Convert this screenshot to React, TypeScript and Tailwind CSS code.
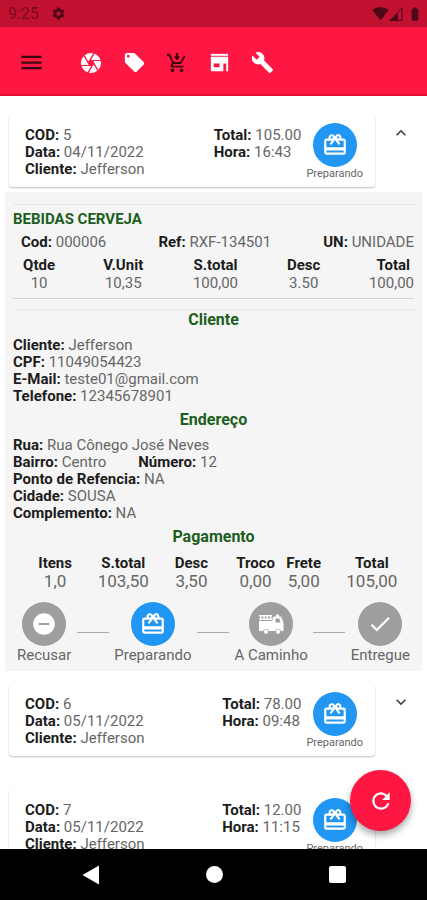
import { useState } from "react";
import type { ReactNode } from "react";
import {
  MdBatteryFull,
  MdBuild,
  MdCamera,
  MdCheck,
  MdExpandLess,
  MdExpandMore,
  MdLocalOffer,
  MdMenu,
  MdRedeem,
  MdRefresh,
  MdRemoveCircle,
  MdSettings,
  MdSignalWifi4Bar,
} from "react-icons/md";

type Order = {
  cod: number;
  date: string;
  time: string;
  total: string;
};

const orders: Order[] = [
  { cod: 5, date: "04/11/2022", time: "16:43", total: "105.00" },
  { cod: 6, date: "05/11/2022", time: "09:48", total: "78.00" },
  { cod: 7, date: "05/11/2022", time: "11:15", total: "12.00" },
];

function TruckIcon() {
  return (
    <svg viewBox="0 0 26 22" className="w-[26px] h-[22px]" fill="currentColor" aria-hidden="true">
      <path d="M1 2h13v1.500H1zM1 5.500h13V7H1zM2 3h1.500v4H2zM5.300 3h1.500v4H5.300zM8.600 3h1.500v4H8.600zM12 3h1.500v4H12z" />
      <path
        fillRule="evenodd"
        d="M1 8h13.500V5.500q0-2 2-2h1.500V1.500h3v2h1q1.200 0 1.700 1.300L25.500 10v8h-2.400a3.100 3.100 0 0 0-6 0h-6a3.100 3.100 0 0 0-6 0H1zM17.500 5.500V9.500h5l-1.200-4z"
      />
      <circle cx="8.100" cy="18.500" r="2.200" />
      <circle cx="20.100" cy="18.500" r="2.200" />
    </svg>
  );
}

function CartDownIcon() {
  return (
    <svg viewBox="0 0 24 24" className="size-[22px]" fill="currentColor" aria-hidden="true">
      <path d="M10.800 1h2.400v4h2.600L12 9 8.200 5h2.600z" />
      <path d="M1 2h3.300l4.200 9h7l3.900-7 1.700 1-3.900 7c-.3.600-1 1-1.700 1H8.100l-.9 1.700c0 .2.100.3.300.3H19v2H7c-1.100 0-2-.9-2-2 0-.4.100-.7.200-1l1.400-2.400L3 4H1z" />
      <circle cx="7" cy="20" r="2" />
      <circle cx="17" cy="20" r="2" />
    </svg>
  );
}

function StoreIcon() {
  return (
    <svg viewBox="0 0 24 24" className="size-[23px]" fill="currentColor" aria-hidden="true">
      <path d="M3 3h18v2H3z" />
      <path fillRule="evenodd" d="M3 6h18v15h-2v-8h-3v8H3zM6 13v4h6v-4z" />
    </svg>
  );
}

function SignalIcon() {
  return (
    <svg viewBox="0 0 14 14" className="w-[14px] h-[14px]" aria-hidden="true">
      <path d="M0 14L9 5v9z" fill="currentColor" />
      <path d="M9 5l4-4v12.500H9" fill="none" stroke="currentColor" />
    </svg>
  );
}

function Field({ label, children }: { label: string; children: ReactNode }) {
  return (
    <p>
      <b className="font-bold text-[#1c1c1c]">{label}:</b> {children}
    </p>
  );
}

function SectionTitle({ children }: { children: ReactNode }) {
  return <h2 className="text-center text-base leading-5 font-bold text-[#1b5e20]">{children}</h2>;
}

function OrderCard({ order, open, onToggle }: { order: Order; open: boolean; onToggle: () => void }) {
  return (
    <div className="flex items-start pl-[9px] pr-4">
      <div className="flex h-[72px] flex-1 justify-between rounded bg-white pt-2 pr-3 pl-4 shadow-[0_1px_2px_rgba(0,0,0,0.25)]">
        <div className="pt-1">
          <Field label="COD">{order.cod}</Field>
          <Field label="Data">{order.date}</Field>
          <Field label="Cliente">Jefferson</Field>
        </div>
        <div className="flex gap-[5px]">
          <div className="pt-1">
            <Field label="Total">{order.total}</Field>
            <Field label="Hora">{order.time}</Field>
          </div>
          <div className="flex flex-col items-center">
            <span className="flex size-11 items-center justify-center rounded-full bg-[#2196f3] text-white">
              <MdRedeem size={26} />
            </span>
            <span className="text-[11px] leading-[14px]">Preparando</span>
          </div>
        </div>
      </div>
      <button
        type="button"
        onClick={onToggle}
        aria-expanded={open}
        aria-label={`Pedido ${order.cod}`}
        className="mt-2 ml-4 text-[#444444]"
      >
        {open ? <MdExpandLess size={20} /> : <MdExpandMore size={20} />}
      </button>
    </div>
  );
}

function Step({ label, active, children }: { label: string; active?: boolean; children: ReactNode }) {
  return (
    <button type="button" className="flex flex-col items-center leading-[18px]">
      <span
        className={
          active
            ? "flex size-11 items-center justify-center rounded-full bg-[#2196f3] text-white"
            : "flex size-11 items-center justify-center rounded-full bg-[#9e9e9e] text-white"
        }
      >
        {children}
      </span>
      {label}
    </button>
  );
}

function StepLine() {
  return <span className="mt-[30px] h-px w-8 bg-[#aaaaaa]" />;
}

function OrderDetails() {
  return (
    <section className="mx-[5px] mt-[5px] bg-[#f5f5f5] px-2 pt-3 pb-[7px]">
      <div className="border-t border-b border-t-[#e6e6e6] border-b-[#d4d4d4] pt-1 pb-[6px]">
        <h2 className="leading-5 font-bold text-[#1b5e20]">BEBIDAS CERVEJA</h2>
        <div className="mt-1 flex justify-between pl-2 leading-[18px]">
          <Field label="Cod">000006</Field>
          <Field label="Ref">RXF-134501</Field>
          <Field label="UN">UNIDADE</Field>
        </div>
        <table className="mt-[5px] w-full table-fixed text-center leading-[18px]">
          <thead className="text-[#1c1c1c]">
            <tr>
              <th className="w-[13%] font-bold">Qtde</th>
              <th className="w-[29%] font-bold">V.Unit</th>
              <th className="w-[17%] font-bold">S.total</th>
              <th className="w-[27%] font-bold">Desc</th>
              <th className="pr-1 text-right font-bold">Total</th>
            </tr>
          </thead>
          <tbody>
            <tr>
              <td>10</td>
              <td>10,35</td>
              <td>100,00</td>
              <td>3.50</td>
              <td className="text-right">100,00</td>
            </tr>
          </tbody>
        </table>
      </div>

      <div className="mt-[10px] border-t border-[#e8e8e8]">
        <SectionTitle>Cliente</SectionTitle>
        <div className="mt-[7px] mb-[5px]">
          <Field label="Cliente">Jefferson</Field>
          <Field label="CPF">11049054423</Field>
          <Field label="E-Mail">teste01@gmail.com</Field>
          <Field label="Telefone">12345678901</Field>
        </div>
        <SectionTitle>Endereço</SectionTitle>
        <div className="mt-[7px] mb-[5px]">
          <Field label="Rua">Rua Cônego José Neves</Field>
          <div className="flex gap-8">
            <Field label="Bairro">Centro</Field>
            <Field label="Número">12</Field>
          </div>
          <Field label="Ponto de Refencia">NA</Field>
          <Field label="Cidade">SOUSA</Field>
          <Field label="Complemento">NA</Field>
        </div>
        <SectionTitle>Pagamento</SectionTitle>
        <table className="mt-[7px] w-full table-fixed text-center leading-[18px]">
          <thead className="text-[#1c1c1c]">
            <tr>
              <th className="w-[21%] font-bold">Itens</th>
              <th className="w-[13%] font-bold">S.total</th>
              <th className="w-[21%] font-bold">Desc</th>
              <th className="w-[11%] font-bold">Troco</th>
              <th className="w-[13%] font-bold">Frete</th>
              <th className="font-bold">Total</th>
            </tr>
          </thead>
          <tbody className="text-[17px] leading-[18px]">
            <tr>
              <td>1,0</td>
              <td>103,50</td>
              <td>3,50</td>
              <td>0,00</td>
              <td>5,00</td>
              <td>105,00</td>
            </tr>
          </tbody>
        </table>
        <div className="mt-3 flex items-start justify-between px-1">
          <Step label="Recusar">
            <MdRemoveCircle size={26} />
          </Step>
          <StepLine />
          <Step label="Preparando" active>
            <MdRedeem size={26} />
          </Step>
          <StepLine />
          <Step label="A Caminho">
            <TruckIcon />
          </Step>
          <StepLine />
          <Step label="Entregue">
            <MdCheck size={26} />
          </Step>
        </div>
      </div>
    </section>
  );
}

export default function App() {
  const [openCod, setOpenCod] = useState<number | null>(5);

  return (
    <div className="relative flex h-screen flex-col overflow-hidden bg-white font-['Roboto',sans-serif] text-[15px] leading-[17px] font-normal text-[#666666]">
      <div className="flex h-[27px] shrink-0 items-center justify-between bg-[#c01131] pr-1 pl-2 text-[#4d0716]">
        <div className="flex items-center gap-3 text-base text-[#7d0b20]">
          9:25
          <MdSettings size={15} className="text-[#4d0716]" />
        </div>
        <div className="flex items-center">
          <MdSignalWifi4Bar size={17} />
          <SignalIcon />
          <MdBatteryFull size={16} className="ml-1" />
        </div>
      </div>

      <header className="flex h-[69px] shrink-0 items-center border-b-2 border-[#e3102f] bg-[#ff1744] pt-1 pl-[18px] text-white">
        <button type="button" aria-label="Menu" className="text-[#3c0610]">
          <MdMenu size={27} />
        </button>
        <nav className="ml-[34px] flex items-center gap-5">
          <button type="button" aria-label="Câmera"><MdCamera size={24} /></button>
          <button type="button" aria-label="Ofertas"><MdLocalOffer size={23} /></button>
          <button type="button" aria-label="Pedidos" className="text-[#3c0610]"><CartDownIcon /></button>
          <button type="button" aria-label="Loja"><StoreIcon /></button>
          <button type="button" aria-label="Ajustes"><MdBuild size={23} /></button>
        </nav>
      </header>

      <main className="min-h-0 flex-1 overflow-hidden pt-[19px]">
        {orders.map((order) => (
          <div key={order.cod} className={order.cod === openCod ? "mb-[13px]" : "mb-[34px]"}>
            <OrderCard
              order={order}
              open={order.cod === openCod}
              onToggle={() => setOpenCod(order.cod === openCod ? null : order.cod)}
            />
            {order.cod === openCod && <OrderDetails />}
          </div>
        ))}
      </main>

      <button
        type="button"
        aria-label="Atualizar"
        className="absolute right-4 bottom-[69px] flex size-[61px] items-center justify-center rounded-full bg-[#ff1744] text-white shadow-[0_4px_7px_rgba(0,0,0,0.35)]"
      >
        <MdRefresh size={26} />
      </button>

      <footer className="flex h-[51px] shrink-0 items-center justify-center bg-black">
        <div className="flex items-center gap-[106px]">
          <button type="button" aria-label="Voltar">
            <svg viewBox="0 0 18 20" className="w-[18px] h-5" fill="#ffffff">
              <path d="M0.500 10L17 0.500v19z" />
            </svg>
          </button>
          <button type="button" aria-label="Início" className="size-[17px] rounded-full bg-white" />
          <button type="button" aria-label="Recentes" className="size-[17px] rounded-xs bg-white" />
        </div>
      </footer>
    </div>
  );
}
